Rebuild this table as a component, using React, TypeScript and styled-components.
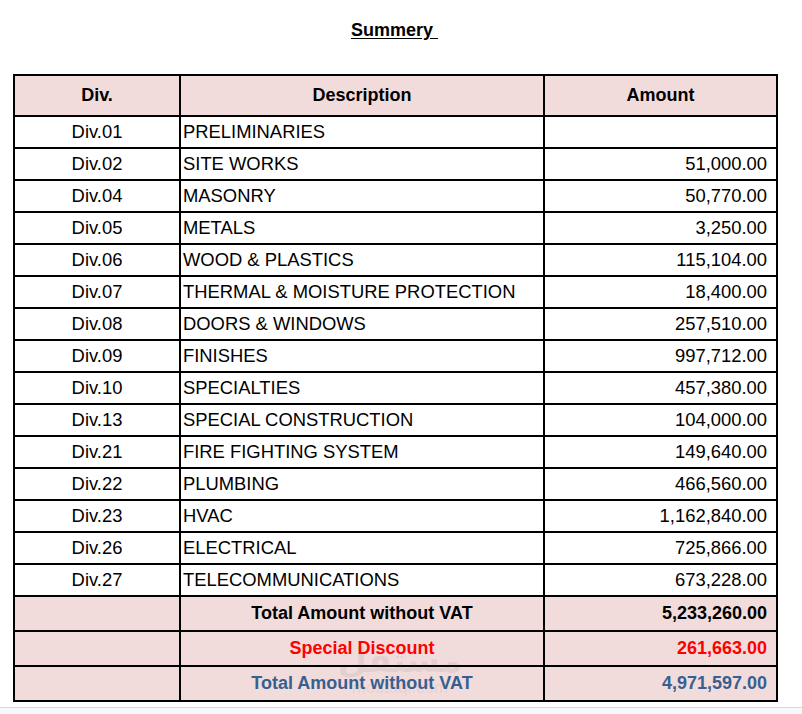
import React from "react";
import styled, { createGlobalStyle } from "styled-components";

const GlobalStyle = createGlobalStyle`
  html, body {
    margin: 0;
    padding: 0;
    background: #ffffff;
  }
  body {
    font-family: "Liberation Sans", Arial, sans-serif;
    color: #000;
  }
`;

const Page = styled.div`
  min-height: 100vh;
  display: flex;
  flex-direction: column;
`;

const Sheet = styled.div`
  width: 763px;
  margin-left: 13px;
  position: relative;
`;

const Title = styled.h1`
  margin: 0;
  padding-top: 20px;
  margin-bottom: 33px;
  font-size: 18px;
  line-height: 21px;
  font-weight: 700;
  text-align: center;
  span {
    text-decoration: underline;
    text-underline-offset: 2px;
  }
`;

const Table = styled.table`
  width: 763px;
  border-collapse: collapse;
  table-layout: fixed;
  font-size: 18.4px;
  border: 2px solid #000;
  td,
  th {
    border: 2px solid #000;
    padding: 0;
    white-space: nowrap;
  }
`;

const HeadRow = styled.tr`
  height: 41px;
  background: #f2dcdb;
  th {
    font-size: 18px;
    font-weight: 700;
    text-align: center;
  }
`;

const Row = styled.tr`
  height: 32px;
`;

const TotalRow = styled.tr<{ $tone?: "red" | "blue" }>`
  height: 35px;
  background: #f2dcdb;
  font-weight: 700;
  font-size: 18px;
  color: ${(p) =>
    p.$tone === "red" ? "#ff0000" : p.$tone === "blue" ? "#366092" : "#000"};
`;

const DivCell = styled.td`
  text-align: center;
`;

const DescCell = styled.td<{ $center?: boolean }>`
  text-align: ${(p) => (p.$center ? "center" : "left")};
  && {
    padding-left: ${(p) => (p.$center ? "0" : "2px")};
  }
`;

const AmountCell = styled.td`
  text-align: right;
  && {
    padding-right: 9px;
  }
`;

const Watermark = styled.div`
  position: absolute;
  left: 332px;
  top: 640px;
  width: 110px;
  display: flex;
  flex-direction: column;
  align-items: center;
  color: rgba(90, 90, 90, 0.09);
  pointer-events: none;
  b {
    font-family: "DejaVu Sans", sans-serif;
    font-size: 34px;
    line-height: 40px;
  }
  small {
    font-family: "Liberation Sans", Arial, sans-serif;
    font-size: 17px;
    line-height: 18px;
    margin-top: -1px;
  }
`;

const Footer = styled.div`
  flex: 1;
  margin-top: 5px;
  border-top: 1px solid #d3d9e2;
  background: #f7f8fa;
`;

const rows: [string, string, string][] = [
  ["Div.01", "PRELIMINARIES", ""],
  ["Div.02", "SITE WORKS", "51,000.00"],
  ["Div.04", "MASONRY", "50,770.00"],
  ["Div.05", "METALS", "3,250.00"],
  ["Div.06", "WOOD & PLASTICS", "115,104.00"],
  ["Div.07", "THERMAL & MOISTURE PROTECTION", "18,400.00"],
  ["Div.08", "DOORS & WINDOWS", "257,510.00"],
  ["Div.09", "FINISHES", "997,712.00"],
  ["Div.10", "SPECIALTIES", "457,380.00"],
  ["Div.13", "SPECIAL CONSTRUCTION", "104,000.00"],
  ["Div.21", "FIRE FIGHTING SYSTEM", "149,640.00"],
  ["Div.22", "PLUMBING", "466,560.00"],
  ["Div.23", "HVAC", "1,162,840.00"],
  ["Div.26", "ELECTRICAL", "725,866.00"],
  ["Div.27", "TELECOMMUNICATIONS", "673,228.00"],
];

const totals: { label: string; value: string; tone?: "red" | "blue" }[] = [
  { label: "Total Amount without VAT", value: "5,233,260.00" },
  { label: "Special Discount", value: "261,663.00", tone: "red" },
  { label: "Total Amount without VAT", value: "4,971,597.00", tone: "blue" },
];

export default function App() {
  return (
    <Page>
      <GlobalStyle />
      <Sheet>
        <Title>
          <span>Summery&nbsp;</span>
        </Title>
        <Table>
          <colgroup>
            <col style={{ width: 166 }} />
            <col style={{ width: 364 }} />
            <col style={{ width: 233 }} />
          </colgroup>
          <thead>
            <HeadRow>
              <th>Div.</th>
              <th>Description</th>
              <th>Amount</th>
            </HeadRow>
          </thead>
          <tbody>
            {rows.map(([div, desc, amount]) => (
              <Row key={div}>
                <DivCell>{div}</DivCell>
                <DescCell>{desc}</DescCell>
                <AmountCell>{amount}</AmountCell>
              </Row>
            ))}
            {totals.map((t, i) => (
              <TotalRow key={i} $tone={t.tone}>
                <DivCell />
                <DescCell $center>{t.label}</DescCell>
                <AmountCell>{t.value}</AmountCell>
              </TotalRow>
            ))}
          </tbody>
        </Table>
        <Watermark>
          <b>مستقل</b>
          <small>mostaql.com</small>
        </Watermark>
      </Sheet>
      <Footer />
    </Page>
  );
}
